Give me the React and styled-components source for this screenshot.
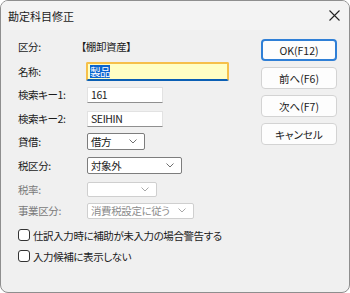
import React from 'react'
import styled, { createGlobalStyle } from 'styled-components'

const Global = createGlobalStyle`
  html, body { margin: 0; padding: 0; background: #ffffff; }
  body { font-family: "Noto Sans CJK JP", "Liberation Sans", sans-serif; }
`

const Window = styled.div`
  width: 350px;
  height: 293px;
  box-sizing: border-box;
  border: 1px solid #8e8e8e;
  border-radius: 8px;
  background: #f0f0f0;
  overflow: hidden;
  display: flex;
  flex-direction: column;
  font-size: 10.5px;
  letter-spacing: -0.4px;
  color: #1b1b1b;
  font-feature-settings: "palt";
`

const TitleBar = styled.div`
  height: 29px;
  display: flex;
  align-items: center;
  justify-content: space-between;
  padding: 0 9px 0 7px;
  background: #f3f3f3;
`

const Title = styled.span`
  font-size: 11px;
  letter-spacing: 0px;
`

const Close = styled.span`
  display: flex;
  align-items: center;
  justify-content: center;
  width: 12px;
  height: 12px;
`

const Body = styled.div`
  flex: 1;
  display: flex;
`

const Form = styled.div`
  padding: 4px 0 0 17px;
  display: flex;
  flex-direction: column;
`

const Row = styled.div`
  height: ${p => p.h}px;
  display: flex;
  align-items: center;
`

const Label = styled.span`
  width: 69px;
  flex: none;
  color: ${p => (p.disabled ? '#7a7a7a' : '#1b1b1b')};
`

const Value = styled.span`
  margin-left: -6px;
`

const TextBox = styled.div`
  box-sizing: border-box;
  width: ${p => p.w}px;
  height: ${p => p.hgt}px;
  background: #ffffff;
  border: 1px solid #e2e2e2;
  border-bottom-color: #8f8f8f;
  display: flex;
  align-items: center;
  padding-left: 3px;
`

const NameBox = styled(TextBox)`
  margin-left: -1px;
  background: #ffffc4;
  border: 2px solid #f6c04a;
  border-bottom: 2px solid #0a5fb4;
  border-radius: 2px;
  padding-left: 2px;
`

const Selected = styled.span`
  background: #0a64d0;
  color: #ffffff;
  line-height: 13px;
`

const Select = styled.div`
  box-sizing: border-box;
  width: ${p => p.w}px;
  height: ${p => p.hgt}px;
  background: #ffffff;
  border: 1px solid ${p => (p.disabled ? '#cfcfcf' : '#7d7d7d')};
  border-radius: 2px;
  display: flex;
  align-items: center;
  justify-content: space-between;
  padding: 0 7px 0 3px;
  color: ${p => (p.disabled ? '#8c8c8c' : '#1b1b1b')};
`

const Check = styled.label`
  display: flex;
  align-items: center;
  gap: 3px;
`

const Box = styled.span`
  box-sizing: border-box;
  width: 12px;
  height: 12px;
  border: 1px solid #333333;
  border-radius: 3px;
  background: #ffffff;
`

const Buttons = styled.div`
  margin-left: auto;
  padding: 9px 12px 0 0;
  display: flex;
  flex-direction: column;
  gap: 6px;
`

const Button = styled.div`
  box-sizing: border-box;
  width: 76px;
  height: 22px;
  background: #fdfdfd;
  border: ${p => (p.primary ? '2px solid #2f7fd6' : '1px solid #d3d3d3')};
  border-radius: 4px;
  display: flex;
  align-items: center;
  justify-content: center;
  letter-spacing: 0;
`

const Chevron = ({ color = '#6f6f6f' }) => (
  <svg width="8" height="5" viewBox="0 0 8 5">
    <path d="M0.5 0.5 L4 4 L7.5 0.5" fill="none" stroke={color} strokeWidth="1" />
  </svg>
)

export default function App() {
  return (
    <Window>
      <Global />
      <TitleBar>
        <Title>勘定科目修正</Title>
        <Close>
          <svg width="11" height="11" viewBox="0 0 11 11">
            <path d="M0.5 0.5 L10.5 10.5 M10.5 0.5 L0.5 10.5" stroke="#222" strokeWidth="1.1" />
          </svg>
        </Close>
      </TitleBar>
      <Body>
        <Form>
          <Row h={24}>
            <Label>区分:</Label>
            <Value>【棚卸資産】</Value>
          </Row>
          <Row h={26}>
            <Label>名称:</Label>
            <NameBox w={143} hgt={19}>
              <Selected>製品</Selected>
            </NameBox>
          </Row>
          <Row h={21}>
            <Label>検索キー1:</Label>
            <TextBox w={76} hgt={16}>161</TextBox>
          </Row>
          <Row h={27}>
            <Label>検索キー2:</Label>
            <TextBox w={76} hgt={16}>SEIHIN</TextBox>
          </Row>
          <Row h={18}>
            <Label>貸借:</Label>
            <Select w={58} hgt={17}>
              <span>借方</span>
              <Chevron />
            </Select>
          </Row>
          <Row h={30}>
            <Label>税区分:</Label>
            <Select w={95} hgt={17}>
              <span>対象外</span>
              <Chevron />
            </Select>
          </Row>
          <Row h={18}>
            <Label disabled>税率:</Label>
            <Select disabled w={70} hgt={15}>
              <span />
              <Chevron color="#a8a8a8" />
            </Select>
          </Row>
          <Row h={25}>
            <Label disabled>事業区分:</Label>
            <Select disabled w={107} hgt={16}>
              <span>消費税設定に従う</span>
              <Chevron color="#a8a8a8" />
            </Select>
          </Row>
          <Row h={24}>
            <Check>
              <Box />
              仕訳入力時に補助が未入力の場合警告する
            </Check>
          </Row>
          <Row h={18}>
            <Check>
              <Box />
              入力候補に表示しない
            </Check>
          </Row>
        </Form>
        <Buttons>
          <Button primary>OK(F12)</Button>
          <Button>前へ(F6)</Button>
          <Button>次へ(F7)</Button>
          <Button>キャンセル</Button>
        </Buttons>
      </Body>
    </Window>
  )
}
